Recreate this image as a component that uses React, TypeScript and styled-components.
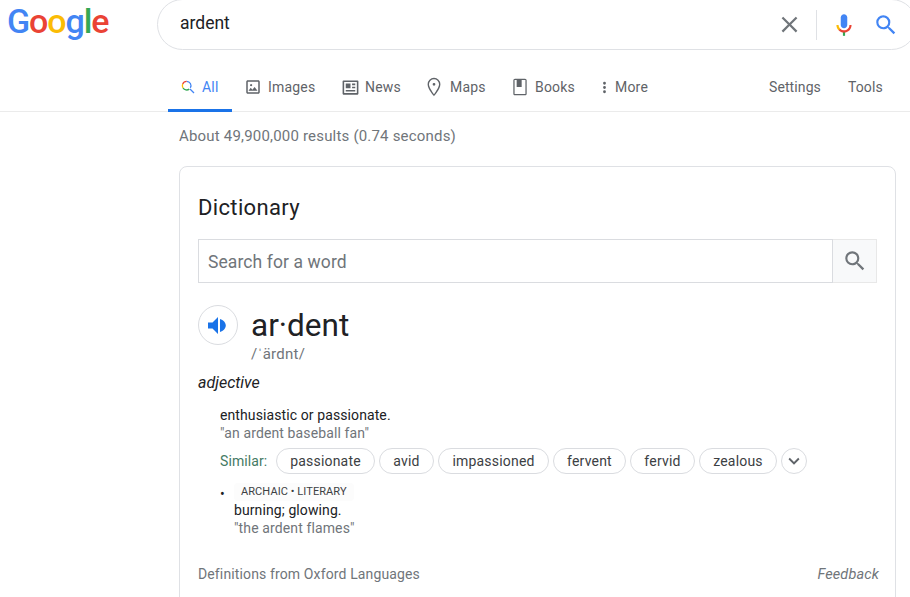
import React from "react";
import styled, { createGlobalStyle } from "styled-components";

const Global = createGlobalStyle`
  html, body { margin: 0; padding: 0; background: #fff; overflow: hidden; }
  body { font-family: Roboto, "Liberation Sans", sans-serif; color: #202124; }
`;
const Page = styled.div`width: 910px; height: 597px; overflow: hidden; display: flex; flex-direction: column; > * { flex-shrink: 0; }`;
const Header = styled.header`display: flex; align-items: flex-start; height: 62px; padding-left: 7px; width: 930px;`;
const Logo = styled.div`
  width: 150px; flex-shrink: 0; font-family: Roboto, sans-serif; font-weight: 500; font-size: 34px; line-height: 44px; letter-spacing: -1.1px; margin-top: -1px;
`;
const L = styled.span<{ $c: string }>`color: ${p => p.$c};`;
const SearchBox = styled.div`
  width: 760px; height: 51px; margin-top: -1px; box-sizing: border-box; border: 1px solid #dfe1e5; border-radius: 26px;
  display: flex; align-items: center; padding: 0 17px 0 22px; flex-shrink: 0;
`;
const Query = styled.div`flex: 1; font-size: 17.5px; color: #202124; padding-bottom: 4px;`;
const ClearBtn = styled.div`display: flex; margin-right: 13px;`;
const Divider = styled.div`width: 1px; height: 30px; background: #dfe1e5; margin-right: 15px;`;
const MicWrap = styled.div`display: flex; margin-right: 16px; margin-left: -1px;`;
const Tabs = styled.nav`
  display: flex; height: 50px; box-sizing: border-box; border-bottom: 1px solid #ebebeb; padding-left: 168px; align-items: stretch;
`;
const Tab = styled.div<{ $active?: boolean; $w: number; $pad: number; $gap: number }>`
  display: flex; align-items: center; gap: ${p => p.$gap}px; box-sizing: border-box; width: ${p => p.$w}px; font-size: 14px; letter-spacing: 0.2px;
  color: ${p => (p.$active ? "#4285f4" : "#5f6368")}; padding-left: ${p => p.$pad}px;
  border-bottom: 3px solid ${p => (p.$active ? "#1a73e8" : "transparent")}; margin-bottom: -1px; padding-top: 3px;
`;
const Spacer = styled.div`flex: 1;`;
const ToolLink = styled.div<{ $w: number }>`display: flex; align-items: center; font-size: 14px; letter-spacing: 0.1px; color: #5f6368; width: ${p => p.$w}px; padding-top: 1px;`;
const Stats = styled.div`margin: 15px 0 0 179px; font-size: 15px; line-height: 18px; color: #70757a; letter-spacing: 0.19px;`;
const Card = styled.section`
  margin: 21px 0 0 179px; width: 717px; box-sizing: border-box; border: 1px solid #dfe1e5; border-radius: 8px;
  padding: 25px 18px 0; height: 460px;
`;
const Title = styled.h2`margin: 0; font-family: Roboto, sans-serif; font-weight: 400; font-size: 22px; line-height: 32px; color: #202124; letter-spacing: 0.35px;`;
const WordSearch = styled.div`display: flex; margin-top: 15px; height: 44px;`;
const WordInput = styled.div`
  width: 635px; box-sizing: border-box; border: 1px solid #dadce0; display: flex; align-items: center; padding: 2px 0 0 9px; font-size: 17.5px; letter-spacing: 0.1px; color: #70757a;
`;
const WordBtn = styled.div`
  width: 44px; box-sizing: border-box; background: #f8f9fa; border: 1px solid #e8e8e8; border-left: 0; display: flex; align-items: center; justify-content: center;
`;
const Entry = styled.div`display: flex; margin-top: 22px; gap: 13px;`;
const Speaker = styled.div`
  width: 40px; height: 40px; box-sizing: border-box; border: 1px solid #dadce0; border-radius: 50%; display: flex; align-items: center; justify-content: center;
`;
const WordCol = styled.div`display: flex; flex-direction: column; padding-top: 2px;`;
const Word = styled.div`font-size: 31.5px; line-height: 38px; color: #202124; font-weight: 400;`;
const Phonetic = styled.div`font-size: 15px; letter-spacing: 0.25px; line-height: 20px; color: #70757a; margin-top: -1px;`;
const Pos = styled.div`font-size: 16px; font-style: italic; line-height: 20px; color: #202124; margin-top: 9px;`;
const Def = styled.div`margin: 13px 0 0 22px; font-size: 14px; letter-spacing: 0.1px; line-height: 18px; color: #202124;`;
const SubDef = styled.div`font-size: 14px; letter-spacing: 0.1px; line-height: 18px; color: #202124;`;
const Example = styled.div`font-size: 14px; line-height: 18px; color: #70757a; letter-spacing: 0.12px;`;
const Similar = styled.div`display: flex; align-items: center; margin: 6px 0 0 22px; gap: 4px;`;
const SimLabel = styled.span`font-size: 14px; color: #447a64; width: 52px; letter-spacing: 0.1px;`;
const Chip = styled.div<{ $w: number }>`
  height: 26px; width: ${p => p.$w}px; box-sizing: border-box; border: 1px solid #dadce0; border-radius: 13px; font-size: 14px; letter-spacing: 0.2px; color: #3c4043;
  display: flex; align-items: center; justify-content: center;
`;
const More = styled.div`
  width: 26px; height: 26px; box-sizing: border-box; border: 1px solid #dadce0; border-radius: 50%; display: flex; align-items: center; justify-content: center;
`;
const Second = styled.div`display: flex; margin: 9px 0 0 22px;`;
const Bullet = styled.div`width: 12px; font-size: 14px; line-height: 22px;`;
const SecondBody = styled.div`display: flex; flex-direction: column; align-items: flex-start; padding-left: 2px;`;
const Tag = styled.div`
  font-size: 11px; letter-spacing: 0.08px; line-height: 18px; color: #3c4043; padding: 0 7px; background: #fcfcfc; border-radius: 4px;
`;
const Footer = styled.div`display: flex; justify-content: space-between; margin-top: 29px; font-size: 14px; letter-spacing: 0.13px; color: #70757a;`;
const Feedback = styled.span`font-style: italic; margin-right: -2px; font-size: 14.5px;`;

const Ic = ({ d, s = 18 }: { d: string; s?: number }) => (
  <svg width={s} height={s} viewBox="0 0 24 24" fill="#5f6368"><path d={d} /></svg>
);
const SEARCH = "M15.5 14h-.79l-.28-.27A6.471 6.471 0 0 0 16 9.5 6.5 6.5 0 1 0 9.5 16c1.61 0 3.09-.59 4.23-1.57l.27.28v.79l5 4.99L20.49 19l-4.99-5zm-6 0C7.01 14 5 11.99 5 9.5S7.01 5 9.5 5 14 7.01 14 9.5 11.99 14 9.5 14z";

export default function App() {
  return (
    <Page>
      <Global />
      <Header>
        <Logo>
          <L $c="#4285f4">G</L><L $c="#ea4335">o</L><L $c="#fbbc05">o</L><L $c="#4285f4">g</L><L $c="#34a853">l</L><L $c="#ea4335">e</L>
        </Logo>
        <SearchBox>
          <Query>ardent</Query>
          <ClearBtn>
            <svg width="27" height="27" viewBox="0 0 24 24" fill="#70757a"><path d="M19 6.41 17.59 5 12 10.59 6.41 5 5 6.41 10.59 12 5 17.59 6.41 19 12 13.41 17.59 19 19 17.59 13.41 12z" /></svg>
          </ClearBtn>
          <Divider />
          <MicWrap>
            <svg width="26" height="26" viewBox="0 0 24 24">
              <path fill="#4285f4" d="M12 15c1.66 0 3-1.31 3-2.97V5c0-1.66-1.34-3-3-3S9 3.34 9 5v7.03C9 13.69 10.34 15 12 15z" />
              <path fill="#34a853" d="M11 18.08h2V22h-2z" />
              <path fill="#fbbc05" d="M7.05 16.87c-1.27-1.33-2.05-2.83-2.05-4.87h2c0 1.45.56 2.42 1.47 3.38v.32l-1.15 1.18z" />
              <path fill="#ea4335" d="M12 16.93a4.97 5.25 0 0 1-3.54-1.55l-1.41 1.49c1.26 1.34 3.02 2.13 4.95 2.13 3.87 0 6.99-2.92 6.99-7h-1.99c0 2.92-2.24 4.93-5 4.93z" />
            </svg>
          </MicWrap>
          <svg width="26" height="26" viewBox="0 0 24 24" fill="#4285f4"><path d={SEARCH} /></svg>
        </SearchBox>
      </Header>
      <Tabs>
        <Tab $active $w={64} $pad={12} $gap={6}>
          <svg width="16" height="16" viewBox="0 0 24 24">
            <path fill="#4285f4" d="M16.32 13.86A7.5 7.5 0 0 0 10 2.5v2a5.5 5.5 0 0 1 4.8 8.2l1.52 1.16z" />
            <path fill="#ea4335" d="M10 2.5a7.5 7.5 0 0 0-6.9 4.6l1.85.75A5.5 5.5 0 0 1 10 4.5v-2z" />
            <path fill="#fbbc05" d="M3.1 7.1a7.5 7.5 0 0 0 .6 6.9l1.7-1.05a5.5 5.5 0 0 1-.45-5.1L3.1 7.1z" />
            <path fill="#34a853" d="M3.7 14A7.5 7.5 0 0 0 14.5 16l-1.2-1.6a5.5 5.5 0 0 1-7.9-1.45L3.7 14z" />
            <path fill="#4285f4" d="M14.3 15.7l1.4-1.4 6 6-1.4 1.4z" />
          </svg>
          All
        </Tab>
        <Tab $w={96} $pad={12} $gap={6}>
          <Ic s={18} d="M19 5v14H5V5h14m0-2H5c-1.1 0-2 .9-2 2v14c0 1.1.9 2 2 2h14c1.1 0 2-.9 2-2V5c0-1.1-.9-2-2-2zm-4.86 8.86-3 3.87L9 13.14 6 17h12l-3.86-5.14zM8 9.5a1.5 1.5 0 1 0 0-.01z" />
          Images
        </Tab>
        <Tab $w={86} $pad={13} $gap={5}>
          <Ic s={19} d="M20 5v14H4V5h16m1-2H3c-.6 0-1 .4-1 1v16c0 .6.4 1 1 1h18c.6 0 1-.4 1-1V4c0-.6-.4-1-1-1zM6 7h6v6H6V7zm8 0h4v2h-4V7zm0 4h4v2h-4v-2zM6 15h12v2H6v-2z" />
          News
        </Tab>
        <Tab $w={85} $pad={9} $gap={5}>
          <Ic s={22} d="M12 2a7 7 0 0 0-7 7c0 5.25 7 13 7 13s7-7.75 7-13a7 7 0 0 0-7-7zm0 17.9C9.900 16.900 6.500 12 6.500 9a5.500 5.500 0 0 1 11 0c0 3-3.400 7.900-5.500 10.900zM12 7.500a1.500 1.500 0 1 0 0 3 1.500 1.500 0 0 0 0-3z" />
          Maps
        </Tab>
        <Tab $w={89} $pad={11} $gap={5}>
          <Ic s={20} d="M18 2H6c-1.100 0-2 .9-2 2v16c0 1.100.9 2 2 2h12c1.100 0 2-.9 2-2V4c0-1.100-.9-2-2-2zm0 18.500H5.500V3.500H8V12h6V3.500h4.500v17z" />
          Books
        </Tab>
        <Tab $w={70} $pad={8} $gap={2}>
          <svg width="17" height="17" viewBox="0 0 24 24" fill="#5f6368"><path d="M12 8a2 2 0 1 0 0-4 2 2 0 0 0 0 4zm0 2a2 2 0 1 0 0 4 2 2 0 0 0 0-4zm0 6a2 2 0 1 0 0 4 2 2 0 0 0 0-4z" /></svg>
          More
        </Tab>
        <Spacer />
        <ToolLink $w={79}>Settings</ToolLink>
        <ToolLink $w={62}>Tools</ToolLink>
      </Tabs>
      <Stats>About 49,900,000 results (0.74 seconds)</Stats>
      <Card>
        <Title>Dictionary</Title>
        <WordSearch>
          <WordInput>Search for a word</WordInput>
          <WordBtn>
            <svg width="26" height="26" viewBox="0 0 24 24" fill="#70757a"><path d={SEARCH} /></svg>
          </WordBtn>
        </WordSearch>
        <Entry>
          <Speaker>
            <svg width="20" height="17" viewBox="0 0 20 17" fill="#1a73e8"><path d="M0 5.500h4.500L10 0v17l-5.500-5.500H0zM12 2c3.400 1 5.800 3.600 5.800 6.500S15.400 14 12 15z" /></svg>
          </Speaker>
          <WordCol>
            <Word>ar·dent</Word>
            <Phonetic>/ˈärdnt/</Phonetic>
          </WordCol>
        </Entry>
        <Pos>adjective</Pos>
        <Def>
          enthusiastic or passionate.
          <Example>"an ardent baseball fan"</Example>
        </Def>
        <Similar>
          <SimLabel>Similar:</SimLabel>
          <Chip $w={99}>passionate</Chip>
          <Chip $w={55}>avid</Chip>
          <Chip $w={111}>impassioned</Chip>
          <Chip $w={73}>fervent</Chip>
          <Chip $w={65}>fervid</Chip>
          <Chip $w={78}>zealous</Chip>
          <More>
            <svg width="22" height="22" viewBox="0 0 24 24" fill="#5f6368"><path d="M7.41 8.59 12 13.17l4.59-4.58L18 10l-6 6-6-6z" /></svg>
          </More>
        </Similar>
        <Second>
          <Bullet>•</Bullet>
          <SecondBody>
            <Tag>ARCHAIC • LITERARY</Tag>
            <SubDef>
              burning; glowing.
              <Example>"the ardent flames"</Example>
            </SubDef>
          </SecondBody>
        </Second>
        <Footer>
          <span>Definitions from Oxford Languages</span>
          <Feedback>Feedback</Feedback>
        </Footer>
      </Card>
    </Page>
  );
}
